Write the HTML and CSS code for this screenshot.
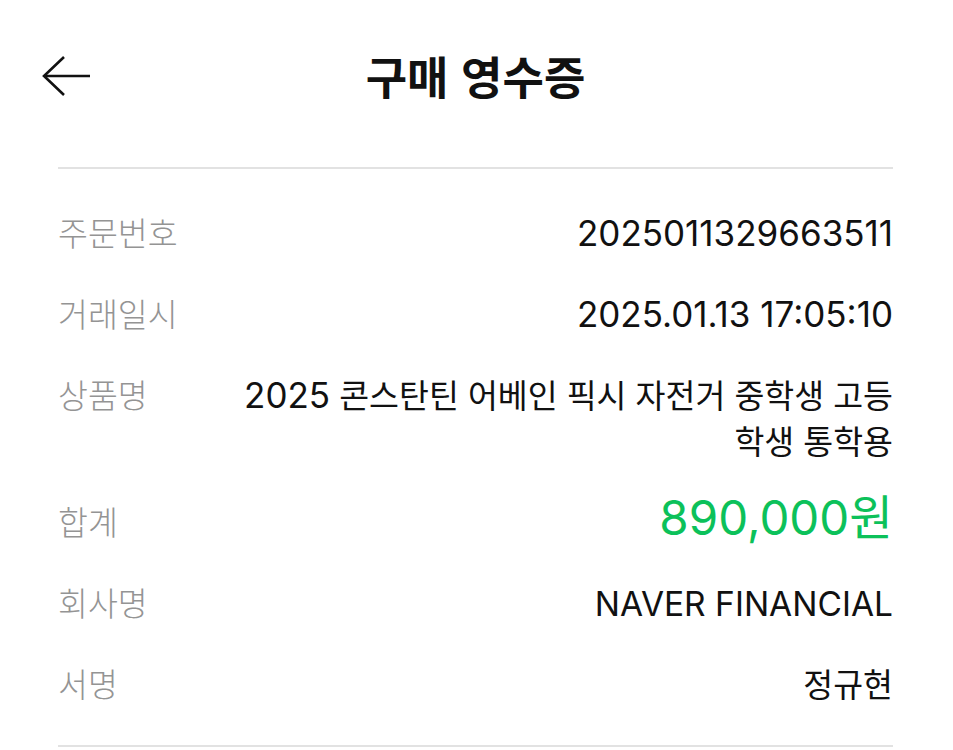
FILE: index.html
```html
<!DOCTYPE html>
<html lang="ko">
<head>
<meta charset="utf-8">
<link rel="stylesheet" href="styles.css">
</head>
<body>
<div class="page">
  <header class="header">
    <button class="back" aria-label="뒤로">
      <svg width="50" height="42" viewBox="0 0 50 42" fill="none" stroke="#111" stroke-width="2.6" stroke-linecap="butt" stroke-linejoin="miter">
        <path d="M2 21 H48"/>
        <path d="M22 2 L2 21 L22 40"/>
      </svg>
    </button>
    <h1 class="title">구매 영수증</h1>
    <span class="spacer"></span>
  </header>
  <div class="list">
    <div class="row"><span class="label">주문번호</span><span class="value"><span class="num">2025011329663511</span></span></div>
    <div class="row"><span class="label">거래일시</span><span class="value"><span class="num">2025.01.13 17:05:10</span></span></div>
    <div class="row"><span class="label">상품명</span><span class="value"><span class="num">2025</span> 콘스탄틴 어베인 픽시 자전거 중학생 고등<br>학생 통학용</span></div>
    <div class="row"><span class="label">합계</span><span class="value amount">890,000원</span></div>
    <div class="row"><span class="label">회사명</span><span class="value"><span class="latin">NAVER FINANCIAL</span></span></div>
    <div class="row"><span class="label">서명</span><span class="value">정규현</span></div>
  </div>
</div>
</body>
</html>
```
FILE: styles.css
```css
html, body {
  margin: 0;
  padding: 0;
  background: #fff;
}
body {
  font-family: "Inter", "Noto Sans CJK KR", sans-serif;
  color: #111;
}
.page {
  padding: 0 60px 0 58px;
}
.header {
  display: grid;
  grid-template-columns: 80px 1fr 80px;
  align-items: center;
  height: 169px;
  border-bottom: 2px solid #e2e2e2;
  box-sizing: border-box;
  padding-bottom: 16px;
}
.back {
  margin-left: -16px;
  background: none;
  border: 0;
  padding: 0;
  display: flex;
  align-items: center;
  height: 42px;
}
.title {
  margin: 0;
  text-align: center;
  font-family: "Noto Sans CJK KR", sans-serif;
  font-weight: 700;
  font-size: 45px;
  line-height: 60px;
  color: #111;
}
.list {
  padding: 22px 0 22px;
  border-bottom: 2px solid #e2e2e2;
}
.row {
  display: flex;
  justify-content: space-between;
  align-items: flex-start;
  padding: 17.5px 0;
  height: 46px;
  line-height: 46px;
}
.row:nth-child(3) {
  height: 92px;
}
.label {
  font-family: "Noto Sans CJK KR", sans-serif;
  font-weight: 300;
  font-size: 32.5px;
  line-height: 46px;
  color: #949494;
  white-space: nowrap;
}
.value {
  font-family: "Noto Sans CJK KR", sans-serif;
  font-size: 32.5px;
  line-height: 46px;
  font-weight: 400;
  text-align: right;
  color: #111;
}
.num {
  font-family: "Inter", sans-serif;
  font-size: 35px;
  line-height: 1;
}
.latin {
  font-family: "Inter", sans-serif;
  font-size: 33.5px;
  line-height: 1;
}
.amount {
  font-family: "Inter", "Noto Sans CJK KR", sans-serif;
  font-size: 47.5px;
  line-height: 40px;
  color: #0cc15a;
}
```
